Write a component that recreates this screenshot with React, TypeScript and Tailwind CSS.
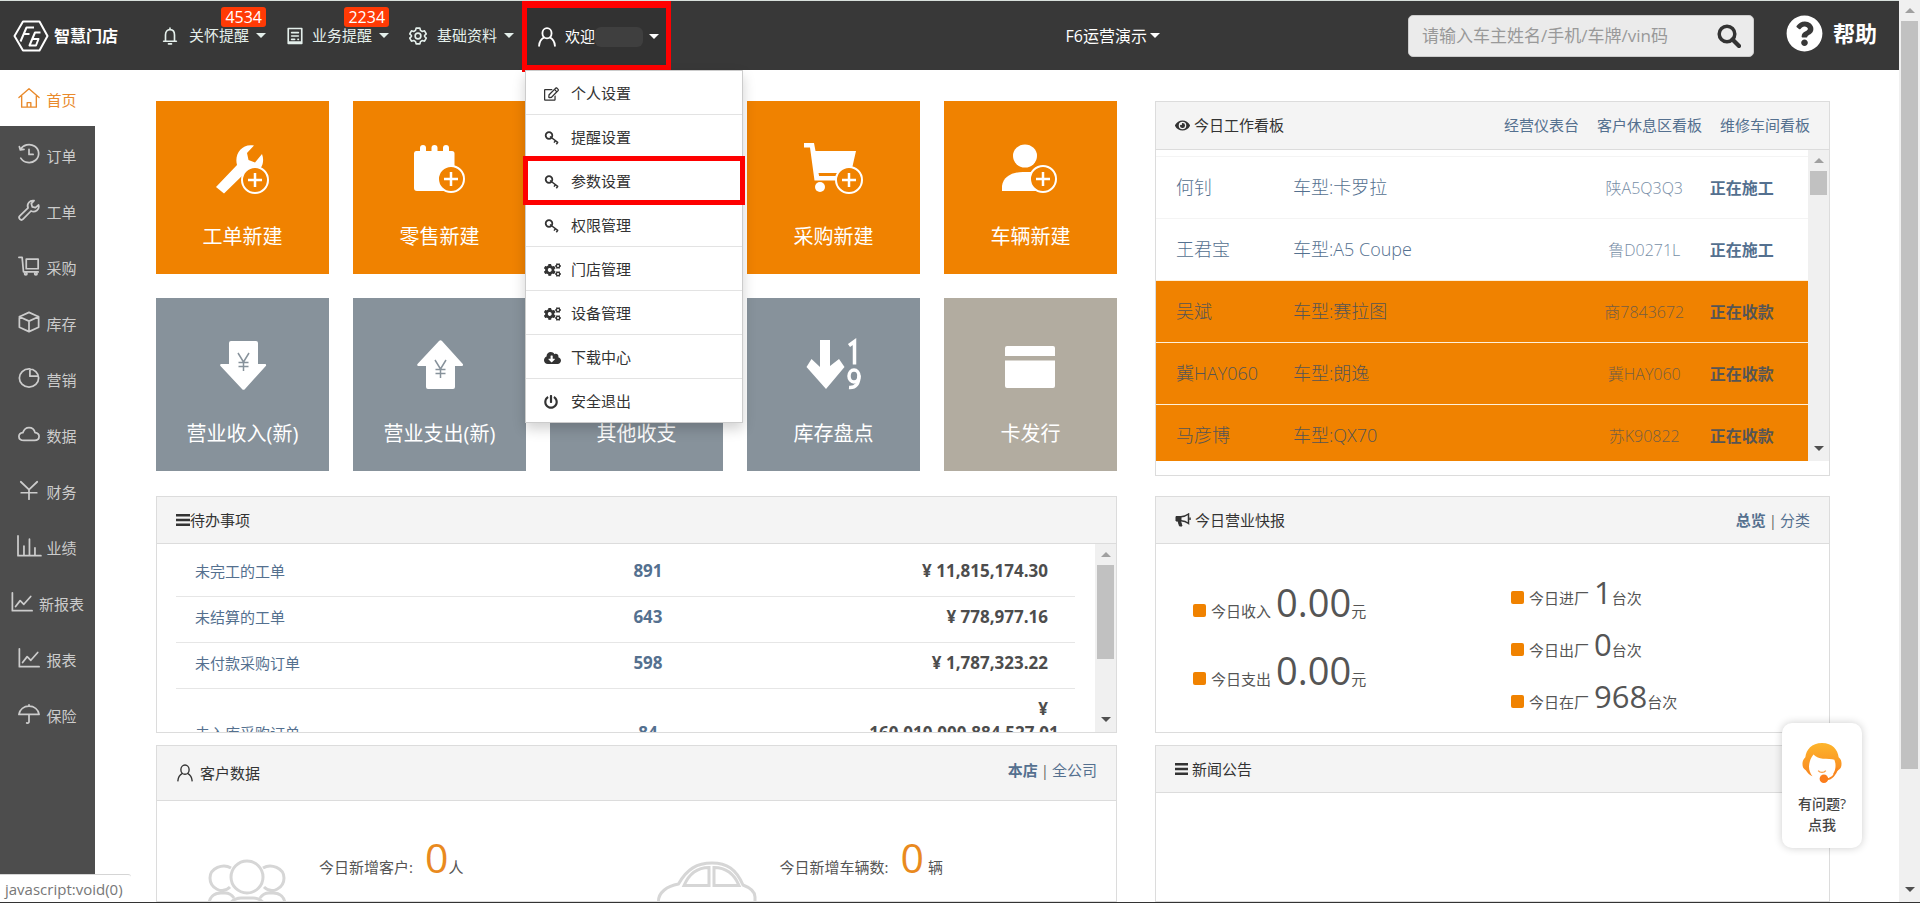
import type { ReactNode } from "react";
import { FaCogs, FaEye, FaPowerOff, FaRegEdit, FaQuestionCircle, FaCloudDownloadAlt } from "react-icons/fa";

function Caret({ className = "" }: { className?: string }) {
  return (
    <svg viewBox="0 0 10 5" className={`h-[5px] w-[10px] shrink-0 ${className}`} fill="currentColor" aria-hidden="true">
      <path d="M0 0h10L5 5z" />
    </svg>
  );
}

function LineIcon({ children, className = "h-[22px] w-[22px]", width = 1.5 }: { children: ReactNode; className?: string; width?: number }) {
  return (
    <svg
      viewBox="0 0 24 24"
      className={`shrink-0 ${className}`}
      fill="none"
      stroke="currentColor"
      strokeWidth={width}
      strokeLinecap="round"
      strokeLinejoin="round"
      aria-hidden="true"
    >
      {children}
    </svg>
  );
}

function Logo() {
  return (
    <svg viewBox="0 0 36 32" className="h-8 w-9 shrink-0" fill="none" stroke="#fff" strokeWidth="2" strokeLinejoin="round" aria-hidden="true">
      <path d="M10 1.5h16.5L34.500 16 26.500 30.500H10L1.500 16z" />
      <path d="M21 7.500h-7.500L7.500 21.500M10.500 14h6" />
      <path d="M27.500 12.500h-5.500l-5.500 13h6.500l2.500-6.500h-6" />
    </svg>
  );
}

function UserIcon({ className = "h-5 w-5", width = 1.8 }: { className?: string; width?: number }) {
  return (
    <LineIcon className={className} width={width}>
      <ellipse cx="12" cy="7.500" rx="5.500" ry="6.200" />
      <path d="M8.500 12.500C5 14.500 2.800 18 2.500 22.500M15.500 12.500c3.500 2 5.700 5.500 6 10" />
    </LineIcon>
  );
}

function KeyIcon() {
  return (
    <svg viewBox="0 0 16 16" className="h-4 w-4" fill="none" stroke="currentColor" aria-hidden="true">
      <ellipse cx="5" cy="5.500" rx="3.300" ry="3.300" strokeWidth="1.800" />
      <path d="M6 6.500l8 6.200M10 12.600l1.700-2.200M12.300 14.300l1.700-2.200" strokeWidth="1.500" />
    </svg>
  );
}

function BarsIcon({ className = "w-[13px]" }: { className?: string }) {
  return (
    <svg viewBox="0 0 14 12" preserveAspectRatio="none" className={`h-3 ${className}`} fill="currentColor" aria-hidden="true">
      <path d="M0 0h14v2.400H0zM0 4.800h14v2.400H0zM0 9.600h14V12H0z" />
    </svg>
  );
}

function BullhornIcon() {
  return (
    <svg viewBox="0 0 16 14" className="h-[14px] w-4" fill="none" stroke="currentColor" aria-hidden="true">
      <path d="M1 3.500h5v4.500H1zM3 8l1.500 5h2.500L5.500 8z" fill="currentColor" />
      <path d="M6 3.800C9 3.600 11.500 2.500 13.500 1v9.500C11.500 9 9 8 6 7.800" strokeWidth="1.500" />
      <path d="M15 4.500v2.500" strokeWidth="1.500" />
    </svg>
  );
}

type NavItem = { label: string; badge?: string; icon: ReactNode };

const topNav: NavItem[] = [
  {
    label: "关怀提醒",
    badge: "4534",
    icon: (
      <LineIcon className="h-[18px] w-[18px]" width={2.200}>
        <path d="M3.500 19h17M6 19v-8.500C6 6 8.500 3.500 12 3.500S18 6 18 10.500V19M12 3.500V1.500M10 22.500h4" />
      </LineIcon>
    ),
  },
  {
    label: "业务提醒",
    badge: "2234",
    icon: (
      <LineIcon className="-mr-[2px] h-[18px] w-[18px]" width={2.200}>
        <path d="M3 2h18v20H3zM7.500 7.500h9M7.500 12h9M7.500 16.500h4M16 16.500h.5M3 20h18" />
      </LineIcon>
    ),
  },
  {
    label: "基础资料",
    icon: (
      <LineIcon className="h-[18px] w-[18px]" width={2.200}>
        <path d="M9.500 1.500h5l.8 3 2.400 1.400 3-.8 2.300 4-2.200 2.200v1.400l2.200 2.200-2.300 4-3-.8-2.400 1.400-.8 3h-5l-.8-3-2.400-1.400-3 .8-2.300-4 2.200-2.200v-1.400L1 9.100l2.300-4 3 .8 2.400-1.400z" />
        <circle cx="12" cy="12" r="3.800" />
      </LineIcon>
    ),
  },
];

const menuItems: { label: string; icon: ReactNode; marked?: boolean }[] = [
  { label: "个人设置", icon: <FaRegEdit className="h-[14px] w-[15px]" /> },
  { label: "提醒设置", icon: <KeyIcon /> },
  { label: "参数设置", icon: <KeyIcon />, marked: true },
  { label: "权限管理", icon: <KeyIcon /> },
  { label: "门店管理", icon: <FaCogs className="h-4 w-[17px]" /> },
  { label: "设备管理", icon: <FaCogs className="h-4 w-[17px]" /> },
  { label: "下载中心", icon: <FaCloudDownloadAlt className="h-4 w-[17px]" /> },
  { label: "安全退出", icon: <FaPowerOff className="h-[14px] w-[14px]" /> },
];

const sideNav: { label: string; icon: ReactNode }[] = [
  { label: "首页", icon: <path d="M1 11.500L12 2l11 9.500M4 9.500V22h16V9.500M10 22v-5h4v5" /> },
  { label: "订单", icon: <path d="M2.500 7.500A10.500 9.800 0 1 1 3 16.500M2.500 7.500l-1-3.500M2.500 7.500l4-.5M12 7v5.500h4.500" /> },
  {
    label: "工单",
    icon: <path d="M22.500 6.500a5.800 5.800 0 0 1-8.300 6.600L5.500 22a2.400 2.400 0 0 1-3.500-3.500l9-8.700A5.800 5.800 0 0 1 17.500 1.800L14.500 5l1 3.500 3.500 1z" />,
  },
  {
    label: "采购",
    icon: (
      <>
        <path d="M1 2.500h3.500l1.500 16h16M9 4.500h13v10.500H9z" />
        <circle cx="8.500" cy="20.500" r="1.300" />
        <circle cx="19.500" cy="20.500" r="1.300" />
      </>
    ),
  },
  { label: "库存", icon: <path d="M12 1.500l10.500 4.800v11.400L12 22.500 1.500 17.700V6.300zM1.500 6.300L12 11l10.500-4.700M12 11v11.500" /> },
  { label: "营销", icon: <path d="M12 2a10.500 10 0 1 0 10.500 10A10.500 10 0 0 0 12 2v0M13 2v8h9" /> },
  { label: "数据", icon: <path d="M6.500 19C3 19 1 17.300 1 14.800c0-2.300 1.800-4 4.300-4.300C6.500 7 9 5 12 5s5.800 2 6.600 5.500c2.600.2 4.400 2 4.400 4.300 0 2.500-2 4.200-5 4.200z" /> },
  { label: "财务", icon: <path d="M3 3l9 8.500L21 3M12 11.500V22M3.500 15h17" /> },
  { label: "业绩", icon: <path d="M0 1v21.500h25M6.500 22V12M12.500 22V4.500M18.500 22v-8" /> },
  { label: "新报表", icon: <path d="M1.500 2v19.500H23M5 17l5-6.500 4 4L21.500 6" /> },
  { label: "报表", icon: <path d="M1.500 2v19.500H23M5 17l5-6.500 4 4L21.500 6" /> },
  { label: "保险", icon: <path d="M1 12.500C2 7 6.500 3.500 12 3.500S22 7 23 12.500zM12 3.500V2M12 12.500v8c0 1.500-1.500 1.700-2.500 1.200" /> },
];

function PlusBadge({ x, y }: { x: number; y: number }) {
  return (
    <g stroke="#fff" fill="#f08200">
      <circle cx={x} cy={y} r="13" strokeWidth="2" />
      <path d={`M${x - 7} ${y}h14M${x} ${y - 7}v14`} strokeWidth="2.500" />
    </g>
  );
}

function TileSvg({ children }: { children?: ReactNode }) {
  return (
    <svg viewBox="0 0 64 56" className="h-14 w-16" fill="#fff" aria-hidden="true">
      {children}
    </svg>
  );
}

const tiles: { label: string; tone: string; icon: ReactNode }[] = [
  {
    label: "工单新建",
    tone: "bg-[#f08200]",
    icon: (
      <TileSvg>
        <path d="M5 46L26 24C23 13 31 2 43 4.500L36 12l1.500 7 6.500 2.500L51 13c3 8 0 17-9 19.500-3 .8-6 .5-8-.5L13 52.500z" />
        <PlusBadge x={44} y={39} />
      </TileSvg>
    ),
  },
  {
    label: "零售新建",
    tone: "bg-[#f08200]",
    icon: (
      <TileSvg>
        <path d="M8 10h36a2.500 2.500 0 0 1 2.500 2.500V50H9a3 3 0 0 1-3-3V12.500A2.500 2.500 0 0 1 8 10z" />
        <rect x="12" y="4" width="6" height="10" rx="3" />
        <rect x="23.500" y="4" width="6" height="10" rx="3" />
        <rect x="35" y="4" width="6" height="10" rx="3" />
        <PlusBadge x={43} y={38} />
      </TileSvg>
    ),
  },
  { label: "", tone: "bg-[#f08200]", icon: <TileSvg /> },
  {
    label: "采购新建",
    tone: "bg-[#f08200]",
    icon: (
      <TileSvg>
        <path d="M2 2h10l1.500 8H54L49 32H16.500l.6 3H46v4.500H12.500L8 6.500H2z" />
        <circle cx="18" cy="46" r="5" />
        <PlusBadge x={47} y={39} />
      </TileSvg>
    ),
  },
  {
    label: "车辆新建",
    tone: "bg-[#f08200]",
    icon: (
      <TileSvg>
        <ellipse cx="26" cy="15" rx="12" ry="11.500" />
        <path d="M3 50v-5c1-9 10-14 21-14h8l12 19z" />
        <PlusBadge x={44} y={38} />
      </TileSvg>
    ),
  },
  {
    label: "营业收入(新)",
    tone: "bg-[#87929b]",
    icon: (
      <TileSvg>
        <path d="M20 3h25a2 2 0 0 1 2 2v21h7c1 0 1.500 1.200.8 2L34 51a2 2 0 0 1-3 0L9.500 28c-.7-.8-.2-2 .8-2H18V5a2 2 0 0 1 2-2z" />
        <path d="M27 15l5.500 9 5.500-9M32.500 24v9M27.500 24.500h10M27.500 28.500h10" fill="none" stroke="#87929b" strokeWidth="1.500" />
      </TileSvg>
    ),
  },
  {
    label: "营业支出(新)",
    tone: "bg-[#87929b]",
    icon: (
      <TileSvg>
        <path d="M20 51h25a2 2 0 0 0 2-2V28h7c1 0 1.500-1.200.8-2L34 3a2 2 0 0 0-3 0L9.500 26c-.7.8-.2 2 .8 2H18v21a2 2 0 0 0 2 2z" />
        <path d="M27 22l5.500 9 5.500-9M32.500 31v9M27.500 31.500h10M27.500 35.500h10" fill="none" stroke="#87929b" strokeWidth="1.500" />
      </TileSvg>
    ),
  },
  { label: "其他收支", tone: "bg-[#87929b]", icon: <TileSvg /> },
  {
    label: "库存盘点",
    tone: "bg-[#87929b]",
    icon: (
      <TileSvg>
        <path d="M18 2h10v26l9-7 5.500 8L24 51 4.500 29l5-8 8.500 8z" />
        <g fill="none" stroke="#fff" strokeWidth="3.500">
          <path d="M47 7.500l5.500-4v23" />
          <ellipse cx="52" cy="38" rx="5" ry="6" />
          <path d="M57 37.500c0 8-3 12.500-10 12" />
        </g>
      </TileSvg>
    ),
  },
  {
    label: "卡发行",
    tone: "bg-[#b2aca0]",
    icon: (
      <TileSvg>
        <path d="M9 8h45a2 2 0 0 1 2 2v8H6v-8a2 2 0 0 1 2-2zM6 22.500h50V48a2 2 0 0 1-2 2H8a2 2 0 0 1-2-2z" />
      </TileSvg>
    ),
  },
];

const workRows = [
  { owner: "何钊", model: "车型:卡罗拉", plate: "陕A5Q3Q3", state: "正在施工", paying: false },
  { owner: "王君宝", model: "车型:A5 Coupe", plate: "鲁D0271L", state: "正在施工", paying: false },
  { owner: "吴斌", model: "车型:赛拉图", plate: "商7843672", state: "正在收款", paying: true },
  { owner: "冀HAY060", model: "车型:朗逸", plate: "冀HAY060", state: "正在收款", paying: true },
  { owner: "马彦博", model: "车型:QX70", plate: "苏K90822", state: "正在收款", paying: true },
];

const todoRows = [
  { name: "未完工的工单", count: "891", amount: "11,815,174.30" },
  { name: "未结算的工单", count: "643", amount: "778,977.16" },
  { name: "未付款采购订单", count: "598", amount: "1,787,323.22" },
  { name: "未入库采购订单", count: "84", amount: "160,010,000,884,527.01" },
];

const moneyStats = [
  { label: "今日收入", value: "0.00" },
  { label: "今日支出", value: "0.00" },
];

const carStats = [
  { label: "今日进厂", value: "1" },
  { label: "今日出厂", value: "0" },
  { label: "今日在厂", value: "968" },
];

function Scrollbar({ thumb }: { thumb: string }) {
  return (
    <div className="flex w-[21px] shrink-0 flex-col items-center bg-[#f0f0f0]" aria-hidden="true">
      <div className="flex h-[21px] shrink-0 items-center">
        <Caret className="rotate-180 text-[#a0a0a0]" />
      </div>
      <div className="min-h-0 w-full flex-1 px-[2px]">
        <div className={`bg-[#c1c1c1] ${thumb}`} />
      </div>
      <div className="flex h-[25px] shrink-0 items-center">
        <Caret className="text-[#505050]" />
      </div>
    </div>
  );
}

function Panel({
  title,
  icon,
  actions,
  children,
  headClass = "h-[47px] items-center",
  gap = "gap-1",
}: {
  title: string;
  icon: ReactNode;
  actions?: ReactNode;
  children?: ReactNode;
  headClass?: string;
  gap?: string;
}) {
  return (
    <section className="flex min-h-0 flex-col overflow-hidden border border-[#dcdcdc] bg-white">
      <header className={`flex shrink-0 justify-between border-b border-[#dcdcdc] bg-[#f4f4f4] px-[19px] text-[15px] text-[#333] ${headClass}`}>
        <h2 className={`flex items-center ${gap}`}>
          {icon}
          {title}
        </h2>
        {actions}
      </header>
      {children}
    </section>
  );
}

function Tabs({ first, second }: { first: string; second: string }) {
  return (
    <nav className="flex gap-[3px] text-[#54708f]">
      <a href="#" className="font-bold">{first}</a>
      <span className="text-[#666]">|</span>
      <a href="#">{second}</a>
    </nav>
  );
}

function Stat({ label, value, unit, big = false }: { label: string; value: string; unit: string; big?: boolean }) {
  return (
    <p className="flex items-baseline text-[15px] text-[#555]">
      <span className="mr-[5px] h-[13px] w-[13px] rounded-[2px] bg-[#f08200]" />
      {label}
      <span className={`ml-[5px] ${big ? "text-[38px] leading-[68px]" : "text-[31px] leading-[52px]"}`}>{value}</span>
      {unit}
    </p>
  );
}

export default function App() {
  return (
    <div className="flex h-screen overflow-hidden border-b border-[#333] bg-white font-['Open_Sans','Noto_Sans_CJK_SC',sans-serif] text-[15px] text-[#333]">
      <div className="relative flex min-w-0 flex-1 flex-col">
        <header className="relative z-10 flex h-[70px] shrink-0 items-center border-t border-[#d8e0dc] bg-[#383838] text-white">
          <a href="#" className="flex w-[122px] shrink-0 items-center gap-[5px] pl-[13px] text-[16px] font-bold whitespace-nowrap">
            <Logo />
            <span>智慧门店</span>
          </a>
          <nav className="flex h-full flex-1 items-center pl-[39px]">
            {topNav.map((item) => (
              <button key={item.label} type="button" className="relative mr-5 flex items-center whitespace-nowrap text-[#e4efeb]">
                {item.icon}
                <span className="mr-[7px] ml-[10px]">{item.label}</span>
                <Caret />
                {item.badge && (
                  <span className="absolute -top-[17px] right-0 rounded-[3px] bg-[#ff3a05] px-[4px] text-[16px] leading-5 text-white">{item.badge}</span>
                )}
              </button>
            ))}
            <div className="relative -ml-3 h-full">
              <button type="button" className="flex h-[71px] items-center border-x-[5px] border-y-[7px] border-[#fe0000] bg-[#323232] pr-[7px] pl-[10px] whitespace-nowrap">
                <UserIcon width={2.200} />
                <span className="ml-2">欢迎</span>
                <span className="mr-[6px] h-5 w-12 rounded-md bg-[#3f3f3f]" />
                <Caret />
              </button>
              <ul className="absolute top-[69px] left-[3px] w-[218px] border border-[#ccc] bg-white text-[#333] shadow-[0_6px_12px_rgba(0,0,0,0.18)]">
                {menuItems.map((item) => (
                  <li key={item.label} className="relative border-b border-[#e3e3e3] last:border-b-0">
                    <a href="#" className="flex h-[43px] items-center gap-[9px] pt-[2px] pl-[18px]">
                      <span className="flex w-[18px]">{item.icon}</span>
                      {item.label}
                    </a>
                    {item.marked && <span className="absolute -inset-x-[3px] -inset-y-[3px] border-[5px] border-[#fe0000]" />}
                  </li>
                ))}
              </ul>
            </div>
          </nav>
          <button type="button" className="flex items-center gap-[3px] text-[16px] whitespace-nowrap">
            F6运营演示
            <Caret />
          </button>
          <form className="ml-[248px] flex h-[42px] w-[346px] items-center rounded-[5px] border border-[#ccc] bg-[#ebebeb] pr-3 pl-[13px]" onSubmit={(e) => e.preventDefault()}>
            <input
              type="text"
              aria-label="搜索车主"
              placeholder="请输入车主姓名/手机/车牌/vin码"
              className="min-w-0 flex-1 bg-transparent text-[17px] text-[#333] outline-none placeholder:text-[#999]"
            />
            <button type="submit" aria-label="搜索">
              <svg viewBox="0 0 24 24" className="h-6 w-6" fill="none" stroke="#333" aria-hidden="true">
                <circle cx="10" cy="10" r="7.800" strokeWidth="3.500" />
                <path d="M15.500 15.500l6.500 6.500" strokeWidth="4.200" strokeLinecap="round" />
              </svg>
            </button>
          </form>
          <a href="#" className="mr-[22px] mb-[5px] ml-8 flex items-center gap-[10px] text-[22px] font-bold whitespace-nowrap">
            <FaQuestionCircle className="h-[37px] w-[37px]" />
            帮助
          </a>
        </header>

        <div className="flex min-h-0 flex-1">
          <nav className="w-[95px] shrink-0 bg-[#4d4d4d]">
            {sideNav.map((item, i) => (
              <a
                key={item.label}
                href="#"
                className={`flex h-14 items-center justify-center gap-[6px] pt-[5px] ${i === 0 ? "bg-white text-[#e98a2b]" : "text-[#cccccc]"}`}
              >
                <LineIcon className="mb-[5px] h-[22px] w-[22px] overflow-visible" width={i === 0 ? 1.5 : 1.9}>
                  {item.icon}
                </LineIcon>
                {item.label}
              </a>
            ))}
          </nav>

          <main className="grid min-w-0 flex-1 grid-cols-[961fr_675fr] grid-rows-[375px_237px_1fr] gap-x-[38px] overflow-hidden pt-[31px] pr-[69px] pl-[61px]">
            <div className="grid grid-cols-5 content-start gap-6">
              {tiles.map((tile, i) => (
                <a key={i} href="#" className={`flex aspect-square flex-col items-center pt-10 text-[20px] leading-6 text-white ${tile.tone}`}>
                  {tile.icon}
                  <span className="mt-7">{tile.label}</span>
                </a>
              ))}
            </div>

            <Panel
              title="今日工作看板"
              headClass="h-12 items-center"
              icon={<FaEye className="h-[15px] w-[15px]" />}
              actions={
                <nav className="flex gap-[18px] text-[#54708f]">
                  <a href="#">经营仪表台</a>
                  <a href="#">客户休息区看板</a>
                  <a href="#">维修车间看板</a>
                </nav>
              }
            >
              <div className="mb-[14px] flex min-h-0 flex-1 overflow-hidden">
                <div className="min-w-0 flex-1 overflow-hidden pt-[6px]">
                  <table className="w-full table-fixed border-collapse font-light">
                    <tbody>
                      {workRows.map((row) => (
                        <tr
                          key={row.plate}
                          className={`h-[62px] border-t ${row.paying ? "border-[#fff0d8] bg-[#f08200] text-[#555]" : "border-[#f4f4f4] text-[#54708f]"}`}
                        >
                          <td className="w-[21%] pl-5 text-[18px]">{row.owner}</td>
                          <td className="text-[18px]">{row.model}</td>
                          <td className="w-[17%] pr-2 text-center text-[16px] opacity-80">{row.plate}</td>
                          <td className="w-[16%] pl-[6px] text-[16px] font-bold">
                            <a href="#">{row.state}</a>
                          </td>
                        </tr>
                      ))}
                    </tbody>
                  </table>
                </div>
                <Scrollbar thumb="h-6" />
              </div>
            </Panel>

            <div className="mt-5 -mb-5 grid">
              <Panel title="待办事项" gap="gap-0" icon={<BarsIcon className="w-[14px]" />}>
                <div className="flex min-h-0 flex-1 overflow-hidden">
                  <div className="min-w-0 flex-1 overflow-hidden pt-[7px] pr-5 pl-[19px]">
                    <table className="w-full table-fixed border-collapse leading-6">
                      <tbody>
                        {todoRows.map((row) => (
                          <tr key={row.name} className="border-b border-[#e6e6e6] align-bottom">
                            <td className="w-[36%] pt-2 pb-[13px] pl-[19px] text-[#54708f]">
                              <a href="#">{row.name}</a>
                            </td>
                            <td className="pt-2 pb-[13px] text-center text-[17px] font-bold text-[#54708f]">{row.count}</td>
                            <td className="w-[31%] pt-2 pr-[27px] pb-[13px] pl-[73px] text-right text-[17px] font-bold text-[#4d4d4d]">¥ {row.amount}</td>
                          </tr>
                        ))}
                      </tbody>
                    </table>
                  </div>
                  <Scrollbar thumb="h-[94px]" />
                </div>
              </Panel>
            </div>

            <div className="mt-5 -mb-5 grid">
              <Panel title="今日营业快报" icon={<BullhornIcon />} actions={<Tabs first="总览" second="分类" />}>
                <div className="grid flex-1 grid-cols-2 pl-[37px]">
                  <div className="pt-6">
                    {moneyStats.map((s) => (
                      <Stat key={s.label} label={s.label} value={s.value} unit="元" big />
                    ))}
                  </div>
                  <div className="pt-[22px]">
                    {carStats.map((s) => (
                      <Stat key={s.label} label={s.label} value={s.value} unit="台次" />
                    ))}
                  </div>
                </div>
              </Panel>
            </div>

            <div className="mt-8 grid min-h-0 overflow-hidden">
              <Panel
                title="客户数据"
                headClass="h-[55px] items-stretch"
                icon={<UserIcon className="mr-[2px] h-[18px] w-[18px]" width={1.8} />}
                actions={
                  <div className="pt-[13px]">
                    <Tabs first="本店" second="全公司" />
                  </div>
                }
              >
                <div className="grid h-40 shrink-0 grid-cols-2 text-[15px] text-[#555]">
                  <div className="flex items-start pl-[50px]">
                    <svg viewBox="0 0 80 80" className="mt-[58px] h-20 w-20 shrink-0" fill="none" stroke="#d6d6d6" strokeWidth="3" aria-hidden="true">
                      <circle cx="40" cy="18" r="16" />
                      <path d="M24 9C16 4 3 9 3 19s12 17 20 9M56 9c8-5 21 0 21 10s-12 17-20 9" />
                      <path d="M2 60V46c0-8 5-12 12-12h4c4 0 7 2 9 5M78 60V46c0-8-5-12-12-12h-4c-4 0-7 2-9 5M20 75V56c0-11 6-17 14-17h12c8 0 14 6 14 17v19" />
                    </svg>
                    <p className="mt-7 ml-8 flex items-baseline">
                      今日新增客户:
                      <span className="ml-3 text-[41px] leading-[56px] text-[#e98a1e]">0</span>
                      人
                    </p>
                  </div>
                  <div className="flex items-start pl-5">
                    <svg viewBox="0 0 100 60" className="mt-[60px] h-[60px] w-[100px] shrink-0" fill="none" stroke="#d6d6d6" strokeWidth="3" aria-hidden="true">
                      <path d="M1.500 52V40c0-8 8-15 20-17C30 8 40 2 55 2s24 6 31 22c8 3 12 7 12 12v16" />
                      <path d="M27 24.500C32 13 40 6.500 52 6.500v18zM57 6.500c12 0 20 6 25 18H57z" />
                    </svg>
                    <p className="mt-7 ml-[23px] flex items-baseline">
                      今日新增车辆数:
                      <span className="mr-1 ml-3 text-[41px] leading-[56px] text-[#e98a1e]">0</span>
                      辆
                    </p>
                  </div>
                </div>
              </Panel>
            </div>

            <div className="mt-8 grid min-h-0 overflow-hidden">
              <Panel title="新闻公告" icon={<BarsIcon />} />
            </div>
          </main>
        </div>

        <a
          href="#"
          className="absolute right-[37px] bottom-[54px] flex h-[125px] w-20 flex-col items-center rounded-[10px] bg-white pt-5 text-[14px] leading-[21px] font-medium text-[#444] shadow-[0_0_8px_rgba(0,0,0,0.2)]"
        >
          <svg viewBox="0 0 42 42" className="mb-[10px] h-10 w-10" fill="none" aria-hidden="true">
            <defs>
              <linearGradient id="hair" x1="0" y1="0" x2="0" y2="1">
                <stop offset="0" stopColor="#fdb52c" />
                <stop offset="1" stopColor="#f9861f" />
              </linearGradient>
            </defs>
            <path
              d="M21 0C10 0 4.500 7 3.500 15 1.500 17 .5 19 .5 22s1 5 3.500 6.500c2 3 4 5 7 6.500C8 31 7 27 7.500 23 8 19 9 16 12 12c3 3 6 4 10 4.500 5 .5 9 0 12 1 2 5 1.500 11-1.500 15 2-.5 4-2 5.500-4 2.500-1.500 3.500-3.500 3.500-6.500s-.5-5-3-7C37.500 7 32 0 21 0z"
              fill="url(#hair)"
            />
            <path d="M37 26c-1.500 7-6 12-12 12" stroke="#f9861f" strokeWidth="2" />
            <path d="M17 29c2 2.500 6 2.500 8 0" stroke="#f9a04a" strokeWidth="1.500" />
            <circle cx="23" cy="37.500" r="4.500" fill="#fb7d1c" />
          </svg>
          <span>有问题?</span>
          <span>点我</span>
        </a>

        <div className="absolute bottom-0 left-0 h-7 rounded-tr-[3px] border-t border-[#d5d5d5] bg-white pr-2 pl-[5px] text-[15px] leading-[28px] text-[#777]">
          javascript:void(0)
        </div>
      </div>
      <Scrollbar thumb="h-[748px]" />
    </div>
  );
}
